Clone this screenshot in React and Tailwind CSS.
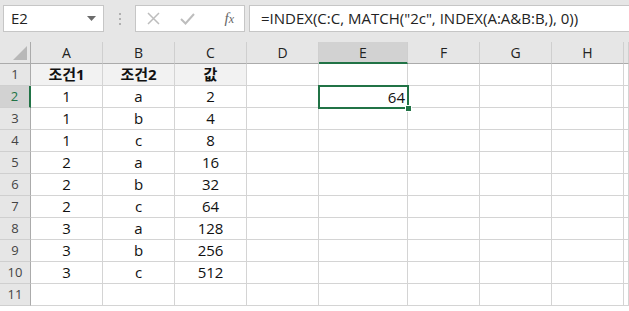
import React from 'react'

const COLS = ['A', 'B', 'C', 'D', 'E', 'F', 'G', 'H', '']
const DATA = [
  ['조건1', '조건2', '값'],
  ['1', 'a', '2'],
  ['1', 'b', '4'],
  ['1', 'c', '8'],
  ['2', 'a', '16'],
  ['2', 'b', '32'],
  ['2', 'c', '64'],
  ['3', 'a', '128'],
  ['3', 'b', '256'],
  ['3', 'c', '512'],
  [],
]

const font = { fontFamily: '"Open Sans", "Noto Sans CJK KR", sans-serif' }

function FormulaBar() {
  return (
    <div className="h-[42px] bg-[#e6e6e6] flex items-start pt-[5px] pl-[3px]">
      <div className="w-[101px] h-[27px] bg-white border border-[#c6c6c6] flex items-center justify-between pl-[7px] pr-[7px]">
        <span className="text-[15px] text-[#222]">E2</span>
        <svg width="9" height="5" viewBox="0 0 9 5"><path d="M0 0h9L4.5 5z" fill="#6b6b6b" /></svg>
      </div>
      <div className="w-[31px] h-[27px] flex flex-col items-center justify-center gap-[3px]">
        <span className="w-[2px] h-[2px] bg-[#b0b0b0]" />
        <span className="w-[2px] h-[2px] bg-[#b0b0b0]" />
        <span className="w-[2px] h-[2px] bg-[#b0b0b0]" />
      </div>
      <div className="w-[110px] h-[27px] bg-white border border-[#c6c6c6] flex items-center">
        <svg className="ml-[11px]" width="13" height="13" viewBox="0 0 13 13">
          <path d="M1 1l11 11M12 1L1 12" stroke="#bdbdbd" strokeWidth="1.5" />
        </svg>
        <svg className="ml-[20px]" width="15" height="12" viewBox="0 0 15 12">
          <path d="M1 6l4.5 4.5L14 1" stroke="#bdbdbd" strokeWidth="2" fill="none" />
        </svg>
        <span className="ml-auto mr-[10px] text-[15px] italic text-[#666]" style={{ fontFamily: '"Liberation Serif", serif' }}>
          f<span className="text-[12px]">x</span>
        </span>
      </div>
      <div className="ml-[4px] flex-1 h-[27px] bg-white border-y border-l border-[#c6c6c6] flex items-center pl-[11px]">
        <span className="text-[15px] text-[#222] whitespace-nowrap" style={font}>
          =INDEX(C:C, MATCH("2c", INDEX(A:A&amp;B:B,), 0))
        </span>
      </div>
    </div>
  )
}

export default function App() {
  return (
    <div className="w-[629px] h-[311px] overflow-hidden bg-white" style={font}>
      <FormulaBar />
      <div className="grid grid-cols-[31px_72px_72px_72px_72px_89px_72px_72px_72px_1fr] grid-rows-[22px] auto-rows-[22px]">
        {/* corner */}
        <div className="bg-[#e6e6e6] border-r border-b border-[#ababab] relative">
          <svg className="absolute right-[3px] bottom-[3px]" width="14" height="14" viewBox="0 0 14 14">
            <path d="M14 0V14H0z" fill="#b8b8b8" />
          </svg>
        </div>
        {COLS.map((c, i) => (
          <div
            key={c + i}
            className={`flex items-center justify-center text-[14px] text-[#222] border-r border-[#cfcfcf] ${
              c === 'E'
                ? 'bg-[#d2d2d2] border-b-2 border-b-[#217346]'
                : 'bg-[#e6e6e6] border-b border-b-[#ababab]'
            }`}
          >
            {c}
          </div>
        ))}
        {DATA.map((row, r) => (
          <React.Fragment key={r}>
            <div
              className={`flex items-center justify-center text-[13px] border-b border-[#cfcfcf] ${
                r === 1
                  ? 'bg-[#d2d2d2] text-[#217346] border-r-2 border-r-[#217346]'
                  : 'bg-[#e6e6e6] text-[#444] border-r border-r-[#ababab]'
              }`}
            >
              {r + 1}
            </div>
            {COLS.map((c, i) => {
              const v = row[i]
              const header = r === 0 && i < 3
              const selected = r === 1 && c === 'E'
              return (
                <div
                  key={i}
                  className={`relative flex items-center justify-center border-r border-b border-[#d4d4d4] text-[15px] text-[#111] ${
                    header ? 'bg-[#f2f2f2] font-bold' : ''
                  } ${selected ? 'z-10' : ''}`}
                >
                  {v}
                  {selected && (
                    <div className="absolute -left-[1px] -top-[1px] w-[91px] h-[24px] border-2 border-[#217346] flex items-center justify-end pr-[2px]">
                      <span className="text-[15px] text-[#111]">64</span>
                      <span className="absolute -right-[5px] -bottom-[5px] w-[7px] h-[7px] bg-[#217346] border border-white" />
                    </div>
                  )}
                </div>
              )
            })}
          </React.Fragment>
        ))}
      </div>
    </div>
  )
}
